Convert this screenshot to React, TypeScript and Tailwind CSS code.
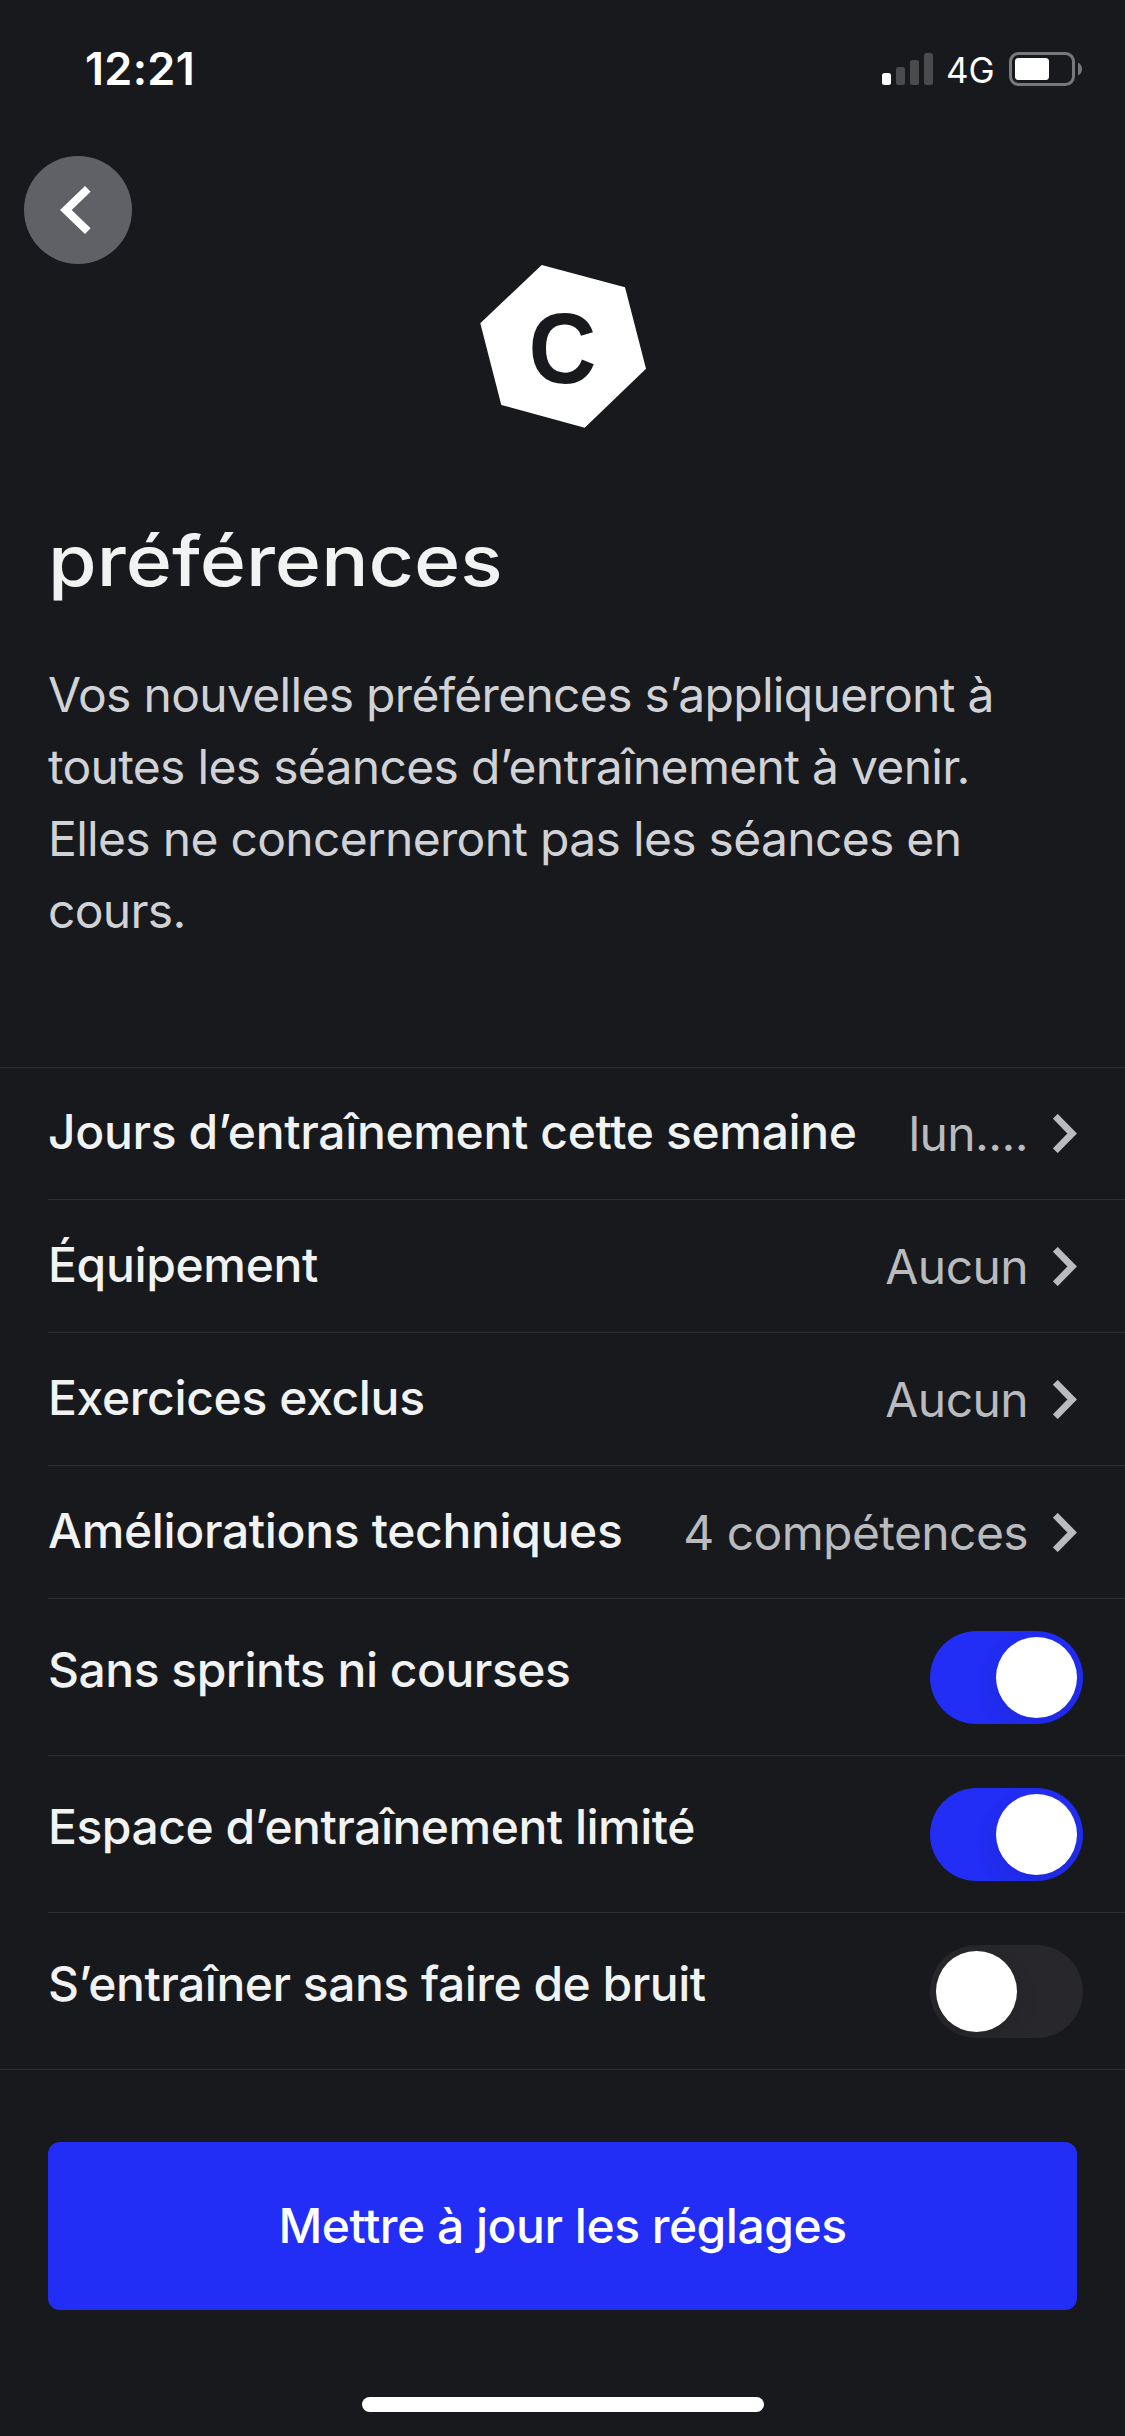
import { useState } from "react";

type LinkRow = { label: string; value: string };
type ToggleKey = "noRunning" | "limitedSpace" | "quiet";

const LINK_ROWS: LinkRow[] = [
  { label: "Jours d’entraînement cette semaine", value: "lun...." },
  { label: "Équipement", value: "Aucun" },
  { label: "Exercices exclus", value: "Aucun" },
  { label: "Améliorations techniques", value: "4 compétences" },
];

const TOGGLE_ROWS: { key: ToggleKey; label: string }[] = [
  { key: "noRunning", label: "Sans sprints ni courses" },
  { key: "limitedSpace", label: "Espace d’entraînement limité" },
  { key: "quiet", label: "S’entraîner sans faire de bruit" },
];

function StatusBar() {
  return (
    <div className="flex h-[138px] items-center justify-between pl-[85px] pr-[43px] text-white">
      <span className="mb-px text-[45px] font-semibold leading-none tracking-[0.3px]">12:21</span>
      <div className="flex items-center">
        <svg width="51" height="32" viewBox="0 0 51 32" className="mr-[13px]">
          <rect x="0" y="20" width="9" height="12" rx="2.5" fill="#fff" />
          <rect x="14" y="14" width="9" height="18" rx="2.5" fill="#4a4b4d" />
          <rect x="28" y="7" width="9" height="25" rx="2.5" fill="#4a4b4d" />
          <rect x="42" y="0" width="9" height="32" rx="2.5" fill="#4a4b4d" />
        </svg>
        <span className="mt-[3px] w-[63px] text-[35px] leading-none">4G</span>
        <svg width="73" height="34" viewBox="0 0 73 34">
          <rect x="1.5" y="1.5" width="63" height="31" rx="8" fill="none" stroke="#77787a" strokeWidth="3" />
          <rect x="6" y="6" width="34" height="22" rx="3.5" fill="#fff" />
          <path d="M69 10.500Q73 12.500 73 17T69 23.500Z" fill="#77787a" />
        </svg>
      </div>
    </div>
  );
}

function Logo() {
  return (
    <svg width="166" height="163" viewBox="0 0 166 163" className="mx-auto mt-px">
      <path d="M61.700 0L145 22.300L166 103.700L104.700 162.700L21.300 140L0.300 58.300Z" fill="#fff" />
      <text
        transform="translate(48.500 118.200) scale(0.93 1)"
        fill="#18191d"
        className="font-['Liberation_Sans',Arial,sans-serif] text-[101px] font-bold"
      >
        C
      </text>
    </svg>
  );
}

function Chevron() {
  return (
    <svg width="24" height="39" viewBox="0 0 24 39" fill="none" className="shrink-0">
      <path d="M2.300 2.300L19.200 19.500L2.300 36.700" stroke="#b9bbbf" strokeWidth="6.800" />
    </svg>
  );
}

function Toggle({ on, onChange }: { on: boolean; onChange: () => void }) {
  return (
    <button
      type="button"
      role="switch"
      aria-checked={on}
      onClick={onChange}
      className={`flex h-[93px] w-[153px] items-center overflow-hidden rounded-full p-1.5 ${
        on ? "justify-end bg-[#222df5]" : "justify-start bg-[#28272b]"
      }`}
    >
      <span className="size-[81px] rounded-full bg-white shadow-[0_9px_24px_rgba(0,0,0,0.1)]" />
    </button>
  );
}

export default function App() {
  const [prefs, setPrefs] = useState<Record<ToggleKey, boolean>>({
    noRunning: true,
    limitedSpace: true,
    quiet: false,
  });

  const flip = (key: ToggleKey) => setPrefs((p) => ({ ...p, [key]: !p[key] }));

  return (
    <div className="flex h-[2436px] w-[1125px] flex-col overflow-hidden bg-[#18191d] font-[Inter,sans-serif] text-[#f1f2f2]">
      <StatusBar />

      <button
        type="button"
        aria-label="Retour"
        className="ml-6 mt-[18px] flex size-[108px] items-center justify-center rounded-full bg-[#606166]"
      >
        <svg width="36" height="54" viewBox="0 0 36 54" fill="none">
          <path d="M27.800 5.800L5.800 27L27.800 48.200" stroke="#fff" strokeWidth="8" />
        </svg>
      </button>

      <Logo />

      <div className="mt-[91px] px-12">
        <h1 className="origin-left scale-x-[1.125] text-[70px] font-[550] leading-[84px]">préférences</h1>
        <p className="mt-14 text-[48px] leading-[72px] tracking-[-0.7px] text-[#d0d2d6]">
          Vos nouvelles préférences s’appliqueront à toutes les séances d’entraînement à venir. Elles ne
          concerneront pas les séances en cours.
        </p>
      </div>

      <div className="mt-[120px] border-y border-[#2d2e31]">
        <ul className="ml-12 divide-y divide-[#2d2e31] text-[48px] leading-[60px]">
          {LINK_ROWS.map((row) => (
            <li key={row.label} className="flex h-[133px] items-center pr-12 first:h-[132px]">
              <span className="mb-[3px] flex-1 font-medium tracking-[-0.35px]">{row.label}</span>
              <span className="mr-[25px] mt-px tracking-[-0.6px] text-[#b9bbbf]">{row.value}</span>
              <Chevron />
            </li>
          ))}
          {TOGGLE_ROWS.map((row) => (
            <li key={row.key} className="flex h-[157px] items-center justify-between pr-[42px] last:h-[156px]">
              <span className="mb-3.5 font-medium tracking-[-0.5px]">{row.label}</span>
              <Toggle on={prefs[row.key]} onChange={() => flip(row.key)} />
            </li>
          ))}
        </ul>
      </div>

      <button
        type="button"
        className="mx-12 mt-[72px] h-[168px] shrink-0 rounded-xl bg-[#222df5] text-[48px] font-medium tracking-[-0.5px] text-white"
      >
        Mettre à jour les réglages
      </button>

      {/* home indicator */}
      <div className="mx-auto mt-[87px] h-[15px] w-[402px] shrink-0 rounded-full bg-white" />
    </div>
  );
}
